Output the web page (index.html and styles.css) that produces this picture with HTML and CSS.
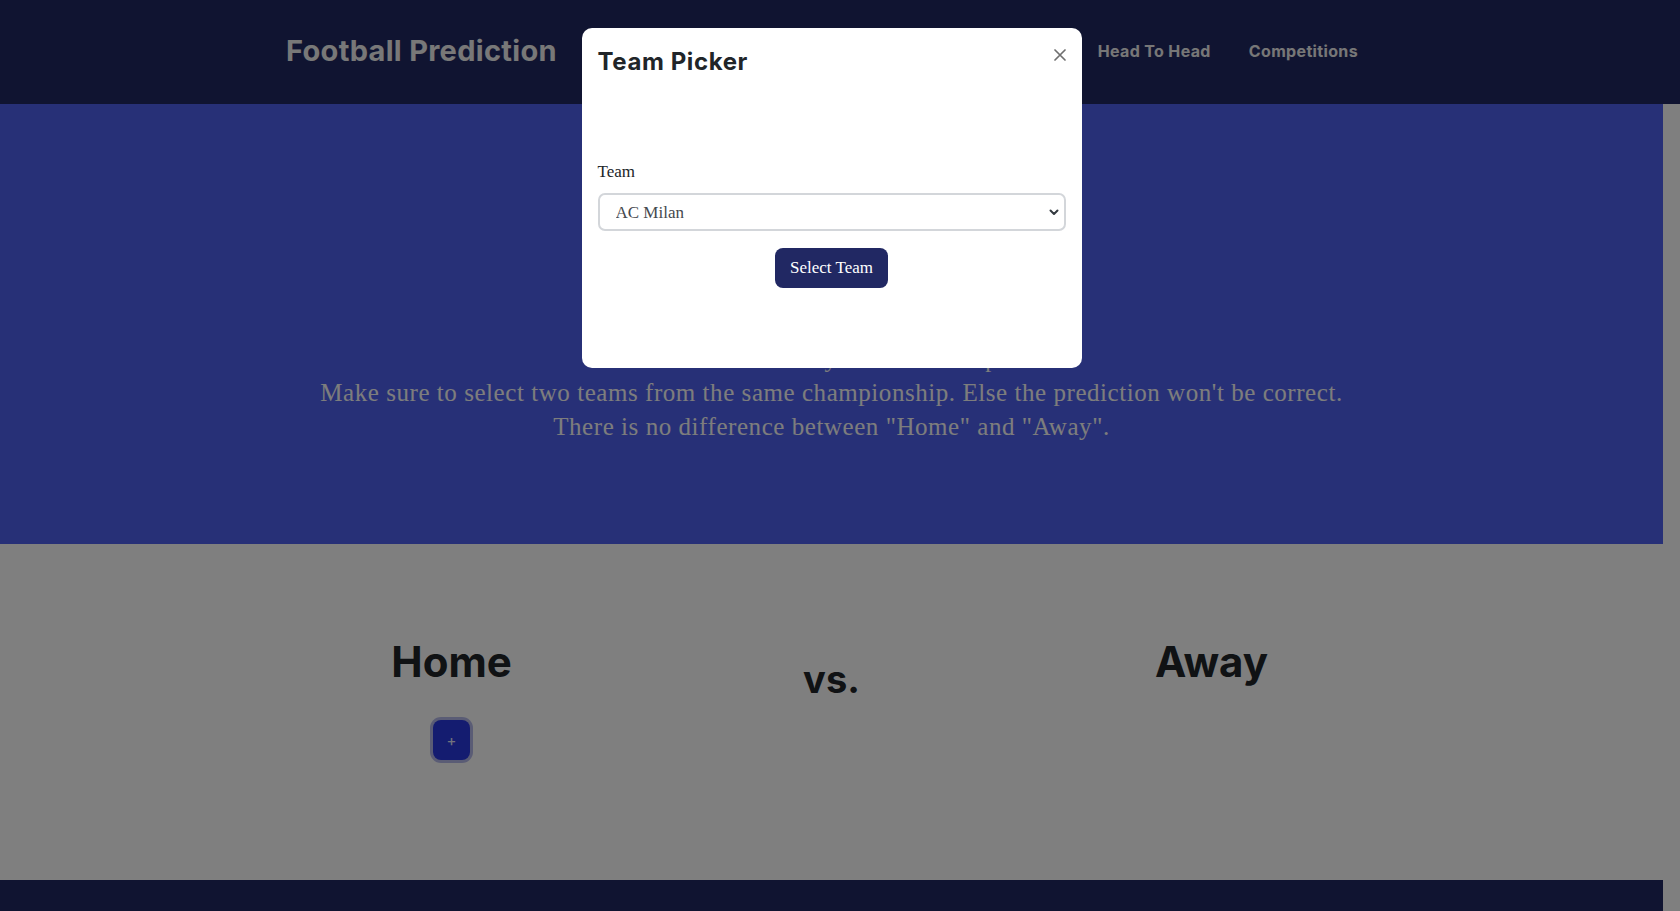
FILE: index.html
```html
<!DOCTYPE html>
<html lang="en">
<head>
<meta charset="utf-8">
<title>Football Prediction</title>
<link rel="stylesheet" href="styles.css">
</head>
<body>
<header class="site-header">
  <div class="header-inner">
    <a class="brand" href="#">Football Prediction</a>
    <ul class="nav">
      <li><a class="nav-link" href="#">Home</a></li>
      <li><a class="nav-link" href="#">Prediction</a></li>
      <li><a class="nav-link" href="#">Head To Head</a></li>
      <li><a class="nav-link" href="#">Competitions</a></li>
    </ul>
  </div>
</header>

<div class="page">
  <section class="hero">
    <h1 class="hero-title">Head To Head</h1>
    <p class="hero-sub">Pick the two teams you want to compare</p>
    <p class="hero-text">Make sure to select two teams from the same championship. Else the prediction won't be correct.<br>There is no difference between "Home" and "Away".</p>
  </section>

  <section class="match">
    <div class="match-row">
      <div class="match-col">
        <h2 class="side-title">Home</h2>
        <button class="add-btn" type="button">+</button>
      </div>
      <div class="match-col">
        <h2 class="vs">vs.</h2>
      </div>
      <div class="match-col">
        <h2 class="side-title">Away</h2>
      </div>
    </div>
  </section>

  <footer class="site-footer"></footer>
</div>

<div class="backdrop"></div>

<div class="modal">
  <div class="modal-dialog">
    <div class="modal-header">
      <h3 class="modal-title">Team Picker</h3>
      <button class="btn-close" type="button" aria-label="Close">
        <svg width="12" height="12" viewBox="0 0 12 12"><path d="M1 1L11 11M11 1L1 11" stroke="#6f6f6f" stroke-width="1.7" stroke-linecap="round" fill="none"/></svg>
      </button>
    </div>
    <div class="modal-body">
      <label class="field-label" for="team">Team</label>
      <div class="select-wrap">
        <select class="team-select" id="team">
          <option>AC Milan</option>
          <option>Inter</option>
          <option>Juventus</option>
        </select>
        <svg class="chevron" width="10" height="7" viewBox="0 0 10 7"><path d="M1.5 1.5L5 5L8.5 1.5" stroke="#343a40" stroke-width="2" fill="none" stroke-linecap="round" stroke-linejoin="round"/></svg>
      </div>
      <div class="actions">
        <button class="select-btn" type="button">Select Team</button>
      </div>
    </div>
  </div>
</div>
</body>
</html>
```

FILE: styles.css
```css
* { box-sizing: border-box; }

html, body {
  margin: 0;
  padding: 0;
}

body {
  background: #ffffff;
  overflow: hidden;
  color: #212529;
  font-family: "Liberation Serif", serif;
}

/* Header */
.site-header {
  background: #212863;
  height: 104px;
  padding: 0 17px 3px 0;
  display: flex;
  align-items: center;
}

.header-inner {
  width: 1091px;
  margin: 0 auto;
  display: flex;
  align-items: center;
}

.brand {
  font-family: "Inter", "Liberation Sans", sans-serif;
  font-weight: 700;
  font-size: 29px;
  color: #f0f0f0;
  text-decoration: none;
  letter-spacing: 0.3px;
}

.nav {
  list-style: none;
  margin: 0 0 0 auto;
  padding: 0;
  display: flex;
}

.nav-link {
  display: block;
  padding: 0 19px;
  font-family: "Inter", "Liberation Sans", sans-serif;
  font-weight: 700;
  font-size: 16px;
  letter-spacing: 0.35px;
  color: #efefef;
  text-decoration: none;
}

/* Page body */
.page {
  margin-right: 17px;
}

.hero {
  background: #4e60ee;
  height: 440px;
  padding-top: 96px;
  text-align: center;
  color: #fafafa;
}

.hero-title {
  margin: 0 0 84px;
  font-family: "Inter", "Liberation Sans", sans-serif;
  font-weight: 700;
  font-size: 48px;
  line-height: 58px;
}

.hero-sub {
  margin: 0;
  font-size: 24px;
  line-height: 34px;
}

.hero-text {
  margin: 0;
  font-size: 25px;
  letter-spacing: 0.55px;
  line-height: 34px;
}

.match {
  background: #ffffff;
  height: 336px;
  padding-top: 93px;
}

.match-row {
  width: 1140px;
  margin: 0 auto;
  display: grid;
  grid-template-columns: repeat(3, 1fr);
}

.match-col {
  display: flex;
  flex-direction: column;
  align-items: center;
}

.side-title,
.vs {
  margin: 0;
  font-family: "Inter", "Liberation Sans", sans-serif;
  font-weight: 700;
  font-size: 42px;
  line-height: 50px;
  color: #212529;
}

.vs {
  margin-top: 19px;
  font-size: 38px;
  line-height: 46px;
}

.add-btn {
  margin-top: 33px;
  width: 37px;
  height: 40px;
  border: none;
  border-radius: 8px;
  background: #2838e0;
  color: rgba(255, 255, 255, 0.9);
  font-family: "Inter", "Liberation Sans", sans-serif;
  font-size: 15px;
  line-height: 1;
  padding: 0;
  box-shadow: 0 0 0 3px rgba(60, 72, 200, 0.38);
}

.site-footer {
  background: #212863;
  height: 120px;
}

/* Modal */
.backdrop {
  position: fixed;
  inset: 0;
  background: rgba(0, 0, 0, 0.5);
}

.modal {
  position: fixed;
  inset: 0;
  padding-right: 17px;
}

.modal-dialog {
  width: 500px;
  margin: 28px auto 0;
  background: #ffffff;
  border-radius: 10px;
}

.modal-header {
  display: flex;
  justify-content: space-between;
  align-items: flex-start;
  padding: 16px 16px 16px;
}

.modal-title {
  margin: 0;
  font-family: "Inter", "Liberation Sans", sans-serif;
  font-weight: 700;
  font-size: 24px;
  letter-spacing: 0.6px;
  line-height: 36px;
  color: #212529;
}

.btn-close {
  margin-top: 5px;
  width: 12px;
  height: 12px;
  padding: 0;
  border: none;
  background: transparent;
  display: flex;
}

.modal-body {
  padding: 64px 16px 80px;
}

.field-label {
  display: block;
  font-size: 17px;
  line-height: 24px;
  color: #212529;
  margin-bottom: 9px;
}

.select-wrap {
  position: relative;
}

.team-select {
  display: block;
  width: 100%;
  height: 38px;
  appearance: none;
  -webkit-appearance: none;
  border: 2px solid #d3d6da;
  border-radius: 7px;
  background: #ffffff;
  padding: 0 30px 0 16px;
  font-family: "Liberation Serif", serif;
  font-size: 17px;
  color: #45494e;
}

.chevron {
  position: absolute;
  right: 7px;
  top: 16px;
  pointer-events: none;
}

.actions {
  display: flex;
  justify-content: center;
  margin-top: 17px;
}

.select-btn {
  height: 40px;
  padding: 0 15px;
  border: none;
  border-radius: 8px;
  background: #212863;
  color: #ffffff;
  font-family: "Liberation Serif", serif;
  font-size: 17px;
}
```
